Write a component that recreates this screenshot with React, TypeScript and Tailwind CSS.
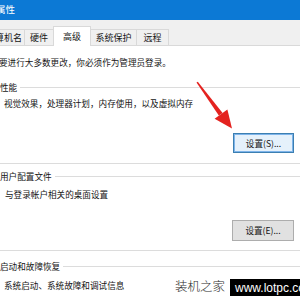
import React from 'react';

const Tab: React.FC<{ label: string; w: string; active?: boolean; align?: string }> = ({ label, w, active, align }) => (
  <div
    className={
      active
        ? `${w} h-[20px] -mb-px bg-white border border-b-0 border-[#d9d9d9] flex items-center justify-center text-[9px] whitespace-nowrap`
        : `${w} h-[16px] bg-[#f0f0f0] border border-b-0 border-[#d9d9d9] flex items-center text-[9px] whitespace-nowrap overflow-hidden ${align ?? 'justify-center'}`
    }
  >
    {label}
  </div>
);

const GroupHeader: React.FC<{ label: string }> = ({ label }) => (
  <div className="flex items-center h-[10px]">
    <span className="pr-[3px] whitespace-nowrap">{label}</span>
    <div className="flex-1 h-px bg-[#dcdcdc]" />
  </div>
);

const Btn: React.FC<{ label: string; focused?: boolean; h: string }> = ({ label, focused, h }) => (
  <div className="flex justify-end pr-[6px]">
    <div
      className={
        focused
          ? `w-[61px] ${h} bg-[#e5f1fb] border border-[#3c7fb1] outline outline-1 outline-[#7eb4ea] -outline-offset-2 flex items-center justify-center`
          : `w-[62px] ${h} bg-[#e1e1e1] border border-[#adadad] flex items-center justify-center`
      }
    >
      {label}
    </div>
  </div>
);

export default function App() {
  return (
    <div className="relative w-[300px] h-[300px] overflow-hidden bg-[#f0f0f0] text-[#141414] text-[8.6px] leading-none font-['Noto_Sans_CJK_SC',sans-serif]">
      {/* title bar */}
      <div className="h-[20px] bg-[#0c79d5] flex items-center text-white text-[9.5px]">
        <span className="-ml-[4px]">属性</span>
      </div>

      {/* tabs */}
      <div className="h-[25px] flex items-end">
        <Tab label="算机名" w="w-[27px] -ml-[2px]" align="justify-end pr-[2px]" />
        <Tab label="硬件" w="w-[30px] -ml-px" />
        <Tab label="高级" w="w-[38px] -ml-px" active />
        <Tab label="系统保护" w="w-[47px] -ml-px" />
        <Tab label="远程" w="w-[33px] -ml-px" />
      </div>

      {/* panel */}
      <div className="bg-white border-t border-[#d9d9d9] h-[255px] pt-[11px]">
        <div className="h-[10px] flex items-center -ml-[1px] whitespace-nowrap">要进行大多数更改，你必须作为管理员登录。</div>

        {/* 性能 */}
        <div className="mt-[15px]">
          <GroupHeader label="性能" />
          <div className="mt-[6px] h-[10px] flex items-center pl-[4px] whitespace-nowrap">视觉效果，处理器计划，内存使用，以及虚拟内存</div>
          <div className="mt-[25px]">
            <Btn label="设置(S)..." focused h="h-[20px]" />
          </div>
          <div className="mt-[10px] h-px bg-[#dcdcdc]" />
        </div>

        {/* 用户配置文件 */}
        <div className="mt-[7px]">
          <GroupHeader label="用户配置文件" />
          <div className="mt-[8px] h-[10px] flex items-center pl-[5px] whitespace-nowrap">与登录帐户相关的桌面设置</div>
          <div className="mt-[21px]">
            <Btn label="设置(E)..." h="h-[21px]" />
          </div>
          <div className="mt-[9px] h-px bg-[#dcdcdc]" />
        </div>

        {/* 启动和故障恢复 */}
        <div className="mt-[10px]">
          <GroupHeader label="启动和故障恢复" />
          <div className="mt-[9px] h-[10px] flex items-center pl-[4px] whitespace-nowrap">系统启动、系统故障和调试信息</div>
        </div>
      </div>

      {/* red arrow */}
      <svg className="absolute left-0 top-0 pointer-events-none" width="300" height="300" viewBox="0 0 300 300">
        <polygon points="196.5,82.5 197.8,81.8 222.6,113 218.8,115.6" fill="#e4221f" />
        <polygon points="232,128.5 214.6,118.8 227.4,109.4" fill="#e4221f" />
      </svg>

      {/* watermark */}
      <div className="absolute left-[175px] top-[278px] h-[17px] flex items-center text-[12.5px] text-[#2a2a2a] font-['Noto_Sans_CJK_SC',serif] font-light whitespace-nowrap">
        装机之家
      </div>
      <div className="absolute left-[230px] top-[279px] w-[80px] h-[17px] bg-black text-white flex items-center pl-[5px] text-[12px] font-['Liberation_Sans',sans-serif] whitespace-nowrap">
        www.lotpc.com
      </div>
    </div>
  );
}
